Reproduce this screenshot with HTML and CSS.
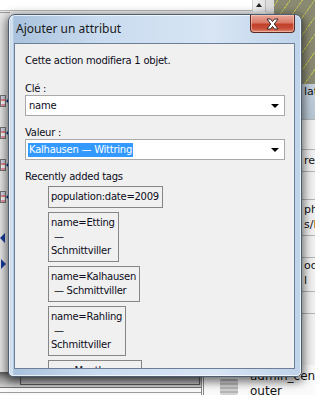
FILE: index.html
```html
<!DOCTYPE html>
<html lang="fr">
<head>
<meta charset="utf-8">
<title>Ajouter un attribut</title>
<link rel="stylesheet" href="styles.css">
</head>
<body>
<div class="desktop">
  <div class="bg-top"></div>
  <div class="bg-scroll"><span class="up"></span></div>
  <div class="bg-stripes"></div>
  <div class="bg-left">
    <span class="ic" style="top:82px"></span>
    <span class="ic" style="top:114px"></span>
    <span class="ic" style="top:146px"></span>
    <span class="ic" style="top:178px"></span>
    <span class="arr-l" style="top:220px"></span>
    <span class="arr-r" style="top:246px"></span>
  </div>
  <div class="bg-right">
    <div class="cell head">lat</div>
    <div class="cell tall"></div>
    <div class="cell">res</div>
    <div class="cell blank"></div>
    <div class="cell two">phie<br>s/F</div>
    <div class="cell sm"></div>
    <div class="cell two b">ode<br>l</div>
    <div class="cell sm"></div>
  </div>
  <div class="bg-bottom">
    <div class="tb"><span class="tab"></span></div>
  </div>
  <div class="bg-br">
    <span class="doc"></span>
    <div class="names"><span>admin_centre</span><span>outer</span></div>
  </div>

  <div class="window">
    <div class="titlebar">
      <span class="title">Ajouter un attribut</span>
      <span class="close"><svg width="17" height="12" viewBox="0 0 17 12"><path d="M3 1h3.5l2 2.6 2-2.6h3.5l-3.7 5 3.7 5h-3.5l-2-2.6-2 2.6h-3.5l3.7-5z" fill="#fff" stroke="#3a2b2b" stroke-width="1"/></svg></span>
    </div>
    <div class="client">
      <p class="line first">Cette action modifiera 1 objet.</p>
      <p class="line label">Clé :</p>
      <div class="combo"><span class="val">name</span><span class="tri"></span></div>
      <p class="line label">Valeur :</p>
      <div class="combo"><span class="val sel">Kalhausen — Wittring</span><span class="tri"></span></div>
      <p class="line label">Recently added tags</p>
      <div class="tags">
        <div class="tag">population:date=2009</div>
        <div class="tag">name=Etting<br>&nbsp;—<br>Schmittviller</div>
        <div class="tag">name=Kalhausen<br>&nbsp;— Schmittviller</div>
        <div class="tag">name=Rahling<br>&nbsp;—<br>Schmittviller</div>
        <div class="tag w5">&nbsp; &nbsp; &nbsp; &nbsp; Menth</div>
      </div>
    </div>
  </div>
</div>
</body>
</html>
```
FILE: styles.css
```css
* { box-sizing: border-box; }
html, body { margin: 0; padding: 0; }
body { width: 315px; height: 395px; overflow: hidden; background: #f0f0f0; font-family: "DejaVu Sans", sans-serif; }
.desktop { position: relative; width: 315px; height: 395px; overflow: hidden; background: #ececec; }

.bg-top { position: absolute; left: 0; top: 0; width: 252px; height: 11px; background: #fff; border-bottom: 1px solid #b8b8b8; }
.bg-scroll { position: absolute; left: 252px; top: 0; width: 14px; height: 12px; background: linear-gradient(90deg, #f4f4f4, #e2e2e2); border-left: 1px solid #d0d0d0; border-right: 1px solid #bcbcbc; }
.bg-scroll .up { position: absolute; left: 3px; top: 3px; border-left: 3px solid transparent; border-right: 3px solid transparent; border-bottom: 4px solid #222; }
.bg-stripes { position: absolute; left: 266px; top: 0; width: 49px; height: 84px; background: repeating-linear-gradient(-55deg, #8a8a72 0 8px, #b8b85a 8px 9px, #8a8a72 9px 10px); border-left: 8px solid #dcdcdc; }

.bg-left { position: absolute; left: 0; top: 12px; width: 10px; height: 364px; background: #e6e6e6; border-top: 1px solid #9a9a9a; }
.bg-left .ic { position: absolute; left: 0; width: 6px; height: 12px; background: linear-gradient(180deg, #d6d6e8 0 3px, #e88 3px 5px, #fff 5px 8px, #e9a 8px 12px); border: 1px solid #777; }
.bg-left .ic::after { content: ""; position: absolute; left: 5px; top: 2px; border-top: 3px solid transparent; border-bottom: 3px solid transparent; border-right: 3px solid #123a8a; }
.bg-left .arr-l { position: absolute; left: 0; border-top: 5px solid transparent; border-bottom: 5px solid transparent; border-right: 5px solid #1a3c9a; }
.bg-left .arr-r { position: absolute; left: 1px; border-top: 5px solid transparent; border-bottom: 5px solid transparent; border-left: 5px solid #1a3c9a; }

.bg-right { position: absolute; left: 298px; top: 84px; width: 17px; height: 300px; background: #f0f0f0; display: flex; flex-direction: column; font-size: 11px; color: #111; }
.bg-right .cell { flex: none; padding-left: 6px; border-bottom: 1px solid #b4b4b4; height: 22px; line-height: 16px; padding-top: 3px; white-space: nowrap; overflow: hidden; }
.bg-right .head { background: linear-gradient(180deg, #c6d3df, #b6c5d3); height: 36px; line-height: 16px; padding-top: 0; }
.bg-right .tall { height: 30px; }
.bg-right .blank { height: 28px; }
.bg-right .two { height: 36px; line-height: 15px; padding-top: 2px; }
.bg-right .two.b { height: 34px; padding-top: 0; }
.bg-right .sm { height: 22px; }

.bg-bottom { position: absolute; left: 0; top: 372px; width: 315px; height: 23px; background: #fafafa; }
.bg-bottom .tb { height: 16px; background: linear-gradient(180deg, #5c5c5c, #9a9a9a 40%, #cfcfcf); border-bottom: 1px solid #707070; position: relative; }
.bg-bottom .tab { position: absolute; left: 20px; top: 3px; width: 180px; height: 10px; border: 1px solid #555; border-top: none; }
.bg-bottom::after { content: ""; position: absolute; left: 0; right: 0; top: 20px; border-top: 1px solid #9c9c9c; }

.bg-br { position: absolute; left: 201px; top: 365px; width: 114px; height: 30px; background: #fafafa; display: flex; align-items: flex-start; border-left: 3px double #888; }
.bg-br .doc { flex: none; margin: 14px 0 0 16px; width: 18px; height: 16px; background: repeating-linear-gradient(180deg, #b5b5b5 0 2px, #d2d2d2 2px 4px); border-radius: 2px; }
.bg-br .names { flex: none; margin-left: 12px; display: flex; flex-direction: column; font-size: 12px; line-height: 15px; padding-top: 4px; color: #111; white-space: nowrap; }

/* dialog */
.window { position: absolute; left: 8px; top: 14px; width: 294px; height: 363px; border: 1px solid #4e5d70; border-radius: 7px 7px 5px 5px; padding: 0 6px 7px 5px; display: flex; flex-direction: column;
  background: linear-gradient(90deg, #b8cde3 0, #dbe8f5 3px, #a9c2dd 5px, #c9dbef 30%, #d7e5f4 70%, #bfd3ea 100%);
  box-shadow: 0 3px 10px 2px rgba(0,0,0,0.55), inset 0 0 0 1px rgba(255,255,255,0.7); }
.titlebar { height: 28px; position: relative; display: flex; align-items: center; flex: none; }
.title { font-family: "Noto Sans", sans-serif; font-size: 12px; color: #1a1a1a; padding-left: 2px; padding-bottom: 1px; }
.close { position: absolute; right: 0; top: 0; width: 45px; height: 18px; border: 1px solid #5a2a22; border-top: none; border-radius: 0 0 4px 4px;
  background: linear-gradient(180deg, #e9a89a 0, #d97a68 45%, #c0402a 55%, #c9503a 80%, #e08a70 100%); display: flex; align-items: center; justify-content: center; box-shadow: inset 0 0 0 1px rgba(255,220,210,0.5); }
.close svg { display: block; }

.client { flex: 1; background: #f0f0f0; border: 1px solid #6d7f96; padding: 9px 10px 0 10px; overflow: hidden; font-size: 10px; letter-spacing: -0.25px; color: #0c0c20; }
.line { margin: 0; line-height: 13px; white-space: nowrap; }
.line.first { margin-top: 1px; }
.label { margin-top: 15px; }
.combo { height: 21px; width: 260px; background: #fff; border: 1px solid #a9a9a9; display: flex; align-items: center; justify-content: space-between; padding: 0 5px 0 2px; }
.combo .val { line-height: 14px; padding: 0 1px; }
.combo .sel { background: #3399ff; color: #fff; }
.combo .tri { width: 0; height: 0; border-left: 4px solid transparent; border-right: 4px solid transparent; border-top: 4px solid #000; }
.combo + .label { margin-top: 10px; }
.tags { padding: 3px 0 0 23px; display: flex; flex-direction: column; align-items: flex-start; gap: 4px; }
.tag { border: 1px solid #858585; padding: 3px 3px 3px 2px; line-height: 14px; white-space: nowrap; }
.tag.w5 { width: 94px; height: 30px; }
```
